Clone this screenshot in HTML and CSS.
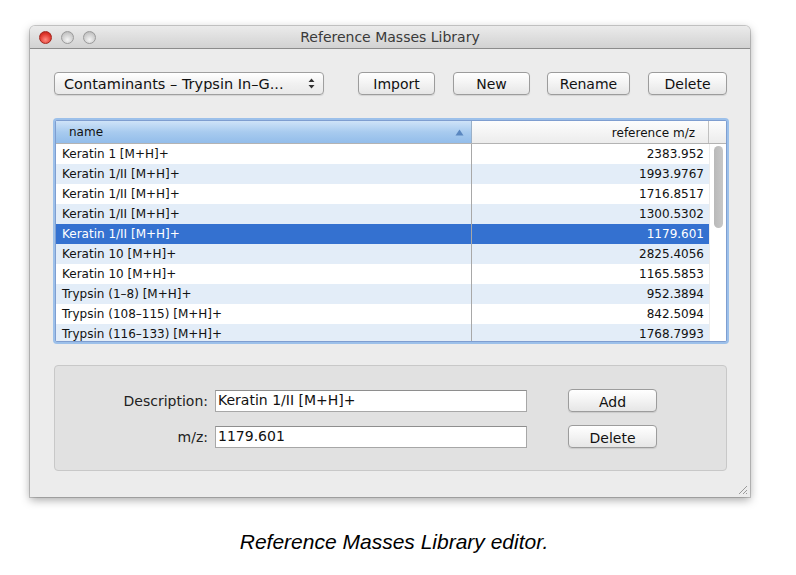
FILE: index.html
```html
<!DOCTYPE html>
<html>
<head>
<meta charset="utf-8">
<link rel="stylesheet" href="styles.css">
</head>
<body>
<div class="page">
  <div class="window">
    <div class="titlebar">
      <div class="lights">
        <span class="light red"></span>
        <span class="light"></span>
        <span class="light"></span>
      </div>
      <div class="title">Reference Masses Library</div>
    </div>
    <div class="content">
      <div class="toolbar">
        <div class="popup">
          <span class="popup-text">Contaminants – Trypsin In–G...</span>
          <svg class="arrows" width="7" height="11" viewBox="0 0 7 11"><path d="M3.5 0.5 L6.5 4 L0.5 4 Z M3.5 10.5 L6.5 7 L0.5 7 Z" fill="#333"/></svg>
        </div>
        <div class="btns">
          <button class="btn w-import">Import</button>
          <button class="btn w-new">New</button>
          <button class="btn w-rename">Rename</button>
          <button class="btn w-delete">Delete</button>
        </div>
      </div>
      <div class="table">
        <div class="thead">
          <div class="th th-name"><span>name</span><svg class="tri" width="9" height="7" viewBox="0 0 9 7"><path d="M4.5 0.5 L8.5 6.5 L0.5 6.5 Z" fill="#5a87c0"/></svg></div>
          <div class="th th-ref">reference m/z</div>
          <div class="th th-corner"></div>
        </div>
        <div class="tbody">
          <div class="rows">
            <div class="row"><div class="c1">Keratin 1 [M+H]+</div><div class="c2">2383.952</div></div>
            <div class="row alt"><div class="c1">Keratin 1/II [M+H]+</div><div class="c2">1993.9767</div></div>
            <div class="row"><div class="c1">Keratin 1/II [M+H]+</div><div class="c2">1716.8517</div></div>
            <div class="row alt"><div class="c1">Keratin 1/II [M+H]+</div><div class="c2">1300.5302</div></div>
            <div class="row sel"><div class="c1">Keratin 1/II [M+H]+</div><div class="c2">1179.601</div></div>
            <div class="row alt"><div class="c1">Keratin 10 [M+H]+</div><div class="c2">2825.4056</div></div>
            <div class="row"><div class="c1">Keratin 10 [M+H]+</div><div class="c2">1165.5853</div></div>
            <div class="row alt"><div class="c1">Trypsin (1–8) [M+H]+</div><div class="c2">952.3894</div></div>
            <div class="row"><div class="c1">Trypsin (108–115) [M+H]+</div><div class="c2">842.5094</div></div>
            <div class="row alt"><div class="c1">Trypsin (116–133) [M+H]+</div><div class="c2">1768.7993</div></div>
          </div>
          <div class="scroll"><div class="thumb"></div></div>
        </div>
      </div>
      <div class="group">
        <div class="form">
          <div class="frow">
            <label class="lbl">Description:</label>
            <div class="field">Keratin 1/II [M+H]+</div>
            <button class="btn w-add">Add</button>
          </div>
          <div class="frow">
            <label class="lbl">m/z:</label>
            <div class="field">1179.601</div>
            <button class="btn w-add">Delete</button>
          </div>
        </div>
      </div>
      <svg class="grip" width="12" height="12" viewBox="0 0 12 12"><path d="M11 3 L3 11 M11 7 L7 11 M11 10 L10 11" stroke="#9a9a9a" stroke-width="1" fill="none"/></svg>
    </div>
  </div>
  <div class="caption">Reference Masses Library editor.</div>
</div>
</body>
</html>
```

FILE: styles.css
```css
* { box-sizing: border-box; }
html, body { margin: 0; padding: 0; background: #fff; }
body { font-family: "DejaVu Sans", "Liberation Sans", sans-serif; color: #111; }

.page { width: 796px; height: 575px; padding: 26px 0 0 30px; }

.window {
  width: 720px;
  height: 471px;
  background: #ececec;
  border-radius: 5px 5px 0 0;
  box-shadow: 0 3px 10px rgba(0,0,0,0.35), 0 0 0 1px rgba(0,0,0,0.18);
  display: flex;
  flex-direction: column;
  overflow: hidden;
}

.titlebar {
  height: 23px;
  background: linear-gradient(#ebebeb, #d2d2d2);
  border-bottom: 1px solid #8c8c8c;
  display: flex;
  align-items: center;
  padding-left: 9px;
  position: relative;
}
.lights { display: flex; gap: 9px; }
.light {
  width: 13px; height: 13px; border-radius: 50%;
  background: radial-gradient(circle at 50% 70%, #f4f4f4, #c6c6c6 70%, #a9a9a9);
  border: 1px solid #9a9a9a;
}
.light.red {
  background: radial-gradient(circle at 50% 70%, #ff8a80, #e0382e 60%, #b01c14);
  border-color: #a3261e;
}
.title {
  position: absolute; left: 0; right: 0; top: 0; bottom: 0;
  text-align: center; line-height: 23px;
  font-size: 14px; color: #3a3a3a;
}

.content {
  flex: 1;
  padding: 22px 23px 0 24px;
  display: flex;
  flex-direction: column;
  position: relative;
}

.toolbar { display: flex; align-items: center; height: 24px; }
.popup {
  width: 270px; height: 23px;
  background: linear-gradient(#ffffff, #f1f1f1 50%, #e9e9e9);
  border: 1px solid #9f9f9f;
  border-radius: 4px;
  box-shadow: 0 1px 1px rgba(0,0,0,0.1);
  display: flex; align-items: center; justify-content: space-between;
  padding: 1px 8px 0 9px;
  font-size: 14.5px;
}
.popup-text { white-space: nowrap; }
.btns { display: flex; gap: 18px; margin-left: 34px; }
.btn {
  font-family: "DejaVu Sans", "Liberation Sans", sans-serif;
  font-size: 14px; color: #111;
  height: 23px;
  background: linear-gradient(#ffffff, #f3f3f3 50%, #e6e6e6);
  border: 1px solid #9c9c9c;
  border-radius: 4px;
  box-shadow: 0 1px 1px rgba(0,0,0,0.1);
  padding: 2px 0 0 0;
}
.w-import { width: 77px; }
.w-new { width: 77px; }
.w-rename { width: 83px; margin-left: -1px; }
.w-delete { width: 79px; }

.table {
  margin-top: 25px;
  margin-left: 1px;
  height: 222px;
  border: 1px solid #7f9ed0;
  box-shadow: 0 0 0 2px #9cc0ea;
  border-radius: 2px;
  background: #fff;
  display: flex; flex-direction: column;
  overflow: hidden;
}
.thead { display: flex; height: 23px; flex: none; border-bottom: 1px solid #b3b3b3; font-size: 12px; }
.th { display: flex; align-items: center; padding-top: 2px; }
.th-name {
  width: 416px;
  background: linear-gradient(#cfe3f8, #a8cbef 50%, #93bdea);
  border-right: 1px solid #9ab0c8;
  padding: 0 7px 0 13px;
  justify-content: space-between;
}
.th-ref {
  flex: 1;
  background: linear-gradient(#fdfdfd, #ececec);
  justify-content: flex-end;
  padding-right: 13px;
  border-right: 1px solid #c0c0c0;
}
.th-corner { width: 17px; background: linear-gradient(#fdfdfd, #ececec); }

.tbody { flex: 1; display: flex; overflow: hidden; }
.rows { flex: 1; display: flex; flex-direction: column; }
.row { display: flex; height: 20px; flex: none; font-size: 12px; align-items: center; }
.row.alt { background: #e3edf8; }
.row.sel { background: #3471d0; color: #fff; }
.c1 { width: 416px; padding-left: 6px; border-right: 1px solid #a8a8a8; height: 100%; display: flex; align-items: center; }
.c2 { flex: 1; text-align: right; padding-right: 5px; }
.scroll { width: 17px; background: #fff; padding: 2px 3px 0 4px; border-left: 1px solid #ececec; }
.thumb { height: 82px; background: linear-gradient(90deg, #b9b9b9, #c7c7c7); border-radius: 5px; }

.group {
  margin-top: 23px;
  height: 106px;
  background: #e1e1e1;
  border: 1px solid #c8c8c8;
  border-radius: 4px;
  padding: 23px 0 0 0;
}
.form { display: flex; flex-direction: column; gap: 13px; }
.frow { display: flex; align-items: center; height: 23px; }
.lbl { width: 160px; text-align: right; font-size: 14px; color: #222; padding: 1px 7px 0 0; }
.field {
  width: 312px; height: 22px;
  background: #fff;
  border: 1px solid #a7a7a7;
  border-top-color: #8e8e8e;
  font-size: 14px;
  padding: 0 0 0 2px;
  line-height: 19px;
}
.w-add { width: 89px; margin-left: 41px; }

.grip { position: absolute; right: 2px; bottom: 2px; }

.caption {
  width: 728px;
  text-align: center;
  margin-top: 33px;
  font-family: "Liberation Sans", Arial, sans-serif;
  font-style: italic;
  font-size: 21px;
  color: #000;
}
```
